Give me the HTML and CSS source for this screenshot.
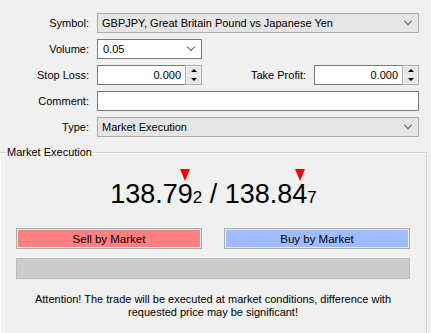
FILE: index.html
```html
<!DOCTYPE html>
<html lang="en">
<head>
    <meta charset="UTF-8">
    <title>Order</title>
    <link rel="stylesheet" href="styles.css">
</head>
<body>
    <div class="form">
        <div class="row">
            <label class="label">Symbol:</label>
            <div class="combo combo-wide">
                <span>GBPJPY, Great Britain Pound vs Japanese Yen</span>
                <span class="chevron"></span>
            </div>
        </div>
        <div class="row">
            <label class="label">Volume:</label>
            <div class="combo combo-edit">
                <span>0.05</span>
                <span class="chevron"></span>
            </div>
        </div>
        <div class="row">
            <label class="label">Stop Loss:</label>
            <div class="spin">
                <span class="spin-value">0.000</span>
                <span class="spin-buttons"><span class="up"></span><span class="down"></span></span>
            </div>
            <label class="label label-fill">Take Profit:</label>
            <div class="spin">
                <span class="spin-value">0.000</span>
                <span class="spin-buttons"><span class="up"></span><span class="down"></span></span>
            </div>
        </div>
        <div class="row">
            <label class="label">Comment:</label>
            <div class="edit"></div>
        </div>
        <div class="row">
            <label class="label">Type:</label>
            <div class="combo combo-wide">
                <span>Market Execution</span>
                <span class="chevron"></span>
            </div>
        </div>
    </div>

    <fieldset class="group">
        <legend>Market Execution</legend>
        <div class="prices">
            138.7<span class="mark">9</span><small>2</small> / 138.8<span class="mark">4</span><small>7</small>
        </div>
        <div class="buttons">
            <button class="btn btn-sell">Sell by Market</button>
            <button class="btn btn-buy">Buy by Market</button>
        </div>
        <div class="progress"></div>
        <p class="note">Attention! The trade will be executed at market conditions, difference with<br>requested price may be significant!</p>
    </fieldset>
</body>
</html>
```

FILE: styles.css
```css
body {
    margin: 0;
    background: #f0f0f0;
    font-family: "Liberation Sans", Arial, sans-serif;
    font-size: 11px;
    color: #000;
    overflow: hidden;
    height: 333px;
    display: flex;
    flex-direction: column;
}

.form {
    padding: 13px 12px 0 0;
    display: flex;
    flex-direction: column;
    gap: 6px;
}

.row {
    display: flex;
    align-items: center;
    height: 20px;
}

.label {
    width: 89px;
    flex: none;
    text-align: right;
    margin-right: 8px;
}

.label-fill {
    flex: 1;
    width: auto;
}

.combo {
    box-sizing: border-box;
    height: 20px;
    display: flex;
    align-items: center;
    justify-content: space-between;
    padding: 0 6px 0 4px;
    border: 1px solid #adadad;
    background: #e5e5e5;
}

.combo-wide {
    flex: 1;
}

.combo-edit {
    width: 105px;
    background: #fff;
    border-color: #7a7a7a;
    padding-left: 5px;
}

.chevron {
    width: 5px;
    height: 5px;
    border-right: 1px solid #606060;
    border-bottom: 1px solid #606060;
    transform: rotate(45deg);
    margin-top: -4px;
    margin-right: 1px;
}

.spin {
    box-sizing: border-box;
    width: 105px;
    height: 20px;
    display: flex;
}

.spin-value {
    flex: 1;
    box-sizing: border-box;
    border: 1px solid #7a7a7a;
    border-right: none;
    background: #fff;
    text-align: right;
    padding: 0 4px;
    line-height: 18px;
}

.spin-buttons {
    width: 17px;
    box-sizing: border-box;
    border: 1px solid #adadad;
    background: #f0f0f0;
    display: flex;
    flex-direction: column;
    padding: 1px;
    gap: 1px;
}

.spin-buttons span {
    flex: 1;
    background: #e5e5e5;
    display: flex;
    align-items: center;
    justify-content: center;
}

.spin-buttons .up::before,
.spin-buttons .down::before {
    content: "";
    border-left: 3px solid transparent;
    border-right: 3px solid transparent;
}

.spin-buttons .up::before {
    border-bottom: 3px solid #000;
}

.spin-buttons .down::before {
    border-top: 3px solid #000;
}

.edit {
    flex: 1;
    box-sizing: border-box;
    height: 20px;
    border: 1px solid #7a7a7a;
    background: #fff;
}

.group {
    flex: 1;
    min-height: 0;
    margin: 8px 0 0 -1px;
    width: 428px;
    box-sizing: border-box;
    border: 1px solid #d5d5d5;
    border-bottom: none;
    box-shadow: 1px 1px 0 #fff inset;
    padding: 0 16px;
}

.group legend {
    padding: 0 1px;
    margin-left: -10px;
    line-height: 14px;
}

.prices {
    text-align: center;
    font-size: 27px;
    line-height: 30px;
    margin-top: 20px;
    padding-left: 1px;
}

.prices small {
    font-size: 17px;
}

.mark {
    position: relative;
}

.mark::before {
    content: "";
    position: absolute;
    left: 50%;
    top: -10px;
    margin-left: -5px;
    border-left: 5px solid transparent;
    border-right: 5px solid transparent;
    border-top: 12px solid #ff0000;
}

.buttons {
    display: flex;
    justify-content: space-between;
    margin-top: 15px;
}

.btn {
    width: 186px;
    height: 21px;
    border: 1px solid #adadad;
    box-shadow: 0 0 0 1px #e8e8e8 inset;
    font-family: inherit;
    font-size: 11.5px;
    color: #000;
    padding: 0;
}

.btn-sell {
    background: #ff8080;
}

.btn-buy {
    background: #9ebcff;
}

.progress {
    margin-top: 9px;
    height: 21px;
    box-sizing: border-box;
    border: 1px solid #bcbcbc;
    background: #cccccc;
}

.note {
    margin: 14px 0 0;
    text-align: center;
    line-height: 13px;
}
```
